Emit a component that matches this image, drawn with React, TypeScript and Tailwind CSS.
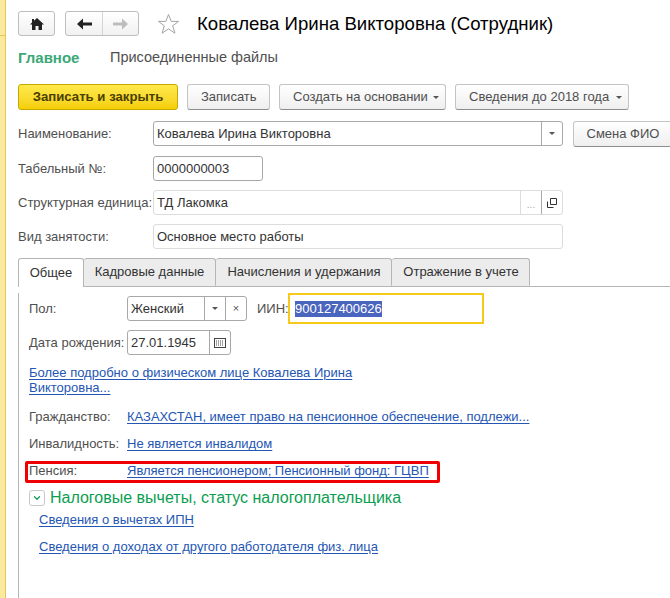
import { ChevronDown } from "lucide-react";

const labelCls = "text-[#4f4f4f]";
const linkCls = "text-[#2456b4] underline underline-offset-2 decoration-1";

function Caret() {
  return <span className="w-0 h-0 border-x-[3px] border-x-transparent border-t-[3px] border-t-[#555]" />;
}

function Btn({ text, caret, width }: { text: string; caret?: boolean; width: string }) {
  return (
    <div className={`${width} h-[26px] flex items-center justify-between pl-[13px] pr-[6px] rounded-[3px] border border-[#c4c4c4] border-b-[#8e8e8e] bg-gradient-to-b from-white to-[#efefef] text-[#4f4f4f] whitespace-nowrap`}>
      <span>{text}</span>
      {caret && <Caret />}
    </div>
  );
}

function Field({ text, width, muted, children }: { text: string; width: string; muted?: boolean; children?: React.ReactNode }) {
  return (
    <div className={`${width} shrink-0 h-[25px] flex items-stretch rounded-[3px] border ${muted ? "border-[#dcdcdc]" : "border-[#a8a8a8]"} bg-white`}>
      <span className="flex-1 px-[3px] leading-[24px] text-[#333] whitespace-nowrap overflow-hidden">{text}</span>
      {children}
    </div>
  );
}

function FormRow({ label, className, children }: { label: string; className: string; children: React.ReactNode }) {
  return (
    <div className={`flex items-center h-[25px] ${className}`}>
      <span className={`w-[135px] shrink-0 whitespace-nowrap ${labelCls}`}>{label}</span>
      {children}
    </div>
  );
}

function InnerRow({ label, link, className }: { label: string; link: string; className: string }) {
  return (
    <div className={`flex items-center h-[16px] whitespace-nowrap ${className}`}>
      <span className={`w-[98px] shrink-0 ${labelCls}`}>{label}</span>
      <span className={linkCls}>{link}</span>
    </div>
  );
}

export default function App() {
  return (
    <div className="w-[670px] h-[598px] overflow-hidden flex bg-white text-[13px] font-['Liberation_Sans',sans-serif]">
      <div className="w-[6px] shrink-0 bg-[#fbe99e] border-r border-[#e5c75a]">
        <div className="h-[36px] border-b border-[#e5c75a]" />
      </div>

      <div className="flex-1 min-w-0 pl-[12px]">
        <div className="flex items-center h-[25px] mt-[11px]">
          <div className="w-[37px] h-[25px] flex items-center justify-center rounded-[3px] border border-[#bdbdbd] bg-gradient-to-b from-white to-[#f1f1f1]">
            <svg width="14" height="12" viewBox="0 0 14 12">
              <path d="M7 0 14 6.5H12V12H8.5V8H5.5V12H2V6.5H0L2 4.6V1H4V2.8Z" fill="#222" />
            </svg>
          </div>
          <div className="ml-[10px] w-[74px] h-[25px] flex rounded-[3px] border border-[#bdbdbd] bg-gradient-to-b from-white to-[#f1f1f1]">
            <div className="w-[37px] flex items-center justify-center border-r border-[#d4d4d4]">
              <svg width="15" height="12" viewBox="0 0 15 12"><path d="M0 6 6 0.5V4.5H15V7.5H6V11.5Z" fill="#222" /></svg>
            </div>
            <div className="flex-1 flex items-center justify-center">
              <svg width="15" height="12" viewBox="0 0 15 12"><path d="M15 6 9 0.5V4.5H0V7.5H9V11.5Z" fill="#bdbdbd" /></svg>
            </div>
          </div>
          <svg className="ml-[18px]" width="23" height="22" viewBox="0 0 23 22">
            <path d="M11.5 1.5 14.2 8.4H21.5L15.7 12.8 17.9 20.2 11.5 15.9 5.1 20.2 7.3 12.8 1.5 8.4H8.8Z" fill="none" stroke="#a3a3a3" strokeWidth="1" />
          </svg>
          <span className="ml-[17px] text-[18.6px] text-black whitespace-nowrap">Ковалева Ирина Викторовна (Сотрудник)</span>
        </div>

        <div className="flex items-center h-[16px] mt-[14px]">
          <span className="w-[92px] text-[15px] font-bold text-[#3aa877]">Главное</span>
          <span className="text-[14.5px] text-[#4f4f4f]">Присоединенные файлы</span>
        </div>

        <div className="flex gap-[9px] mt-[18px]">
          <div className="w-[160px] h-[26px] flex items-center justify-center rounded-[3px] border border-[#c5a800] bg-gradient-to-b from-[#ffe94a] to-[#f5cf00] text-[13.2px] font-bold text-[#4a3f00]">
            Записать и закрыть
          </div>
          <Btn text="Записать" width="w-[83px]" />
          <Btn text="Создать на основании" caret width="w-[167px]" />
          <Btn text="Сведения до 2018 года" caret width="w-[174px]" />
        </div>

        <FormRow label="Наименование:" className="mt-[11px]">
          <Field text="Ковалева Ирина Викторовна" width="w-[410px]">
            <span className="w-[21px] flex items-center justify-center border-l border-[#a8a8a8]"><Caret /></span>
          </Field>
          <div className="ml-[10px] w-[100px] shrink-0 h-[26px] flex items-center justify-center rounded-l-[3px] border border-[#c4c4c4] border-b-[#8e8e8e] bg-gradient-to-b from-white to-[#efefef] text-[#4f4f4f]">
            Смена ФИО
          </div>
        </FormRow>

        <FormRow label="Табельный №:" className="mt-[10px]">
          <Field text="0000000003" width="w-[110px]" />
        </FormRow>

        <FormRow label="Структурная единица:" className="mt-[9px]">
          <Field text="ТД Лакомка" width="w-[410px]" muted>
            <span className="w-[21px] flex items-center justify-center border-l border-[#dcdcdc] text-[#aaa] text-[10px] pt-[4px]">...</span>
            <span className="w-[21px] flex items-center justify-center border-l border-[#a8a8a8]">
              <svg width="10" height="10" viewBox="0 0 10 10" fill="none" stroke="#333"><path d="M3.5 .5H9.5V6.5H3.5Z" /><path d="M.5 3.5V9.5H6.5" /></svg>
            </span>
          </Field>
        </FormRow>

        <FormRow label="Вид занятости:" className="mt-[9px]">
          <Field text="Основное место работы" width="w-[410px]" muted />
        </FormRow>

        <div className="mt-[9px] flex h-[29px] border-b border-[#b5b5b5]">
          <div className="w-[66px] h-[29px] flex items-center justify-center rounded-t-[3px] border border-b-0 border-[#b5b5b5] bg-white text-[#333]">Общее</div>
          <div className="w-[132px] flex items-center justify-center rounded-t-[3px] border-y border-r border-t-[#b5b5b5] border-r-[#b5b5b5] border-b-transparent bg-[#ececec] text-[#333]">Кадровые данные</div>
          <div className="w-[176px] pl-[1px] flex items-center justify-center rounded-t-[3px] border-y border-r border-t-[#b5b5b5] border-r-[#b5b5b5] border-b-transparent bg-[#ececec] text-[#333]">Начисления и удержания</div>
          <div className="w-[138px] pl-[1px] flex items-center justify-center rounded-t-[3px] border-y border-r border-t-[#b5b5b5] border-r-[#b5b5b5] border-b-transparent bg-[#ececec] text-[#333]">Отражение в учете</div>
        </div>

        <div className="h-[311px] border-l border-[#b5b5b5] pl-[10px]">
          <div className="flex items-center h-[31px] mt-[6px]">
            <span className={`w-[98px] shrink-0 ${labelCls}`}>Пол:</span>
            <Field text="Женский" width="w-[120px]">
              <span className="w-[21px] flex items-center justify-center border-l border-[#a8a8a8]"><Caret /></span>
              <span className="w-[21px] flex items-center justify-center border-l border-[#a8a8a8] text-[#555] text-[11px]">×</span>
            </Field>
            <span className={`ml-[10px] w-[31px] ${labelCls}`}>ИИН:</span>
            <div className="w-[196px] h-[31px] flex items-center border-2 border-[#f7c918] pl-[5px]">
              <span className="bg-[#4a65bd] text-white leading-[16px]">900127400626</span>
            </div>
          </div>

          <div className="flex items-center h-[25px] mt-[6px]">
            <span className={`w-[98px] shrink-0 whitespace-nowrap ${labelCls}`}>Дата рождения:</span>
            <Field text="27.01.1945" width="w-[104px]">
              <span className="w-[21px] flex items-center justify-center border-l border-[#a8a8a8]">
                <svg width="12" height="10" viewBox="0 0 12 10"><rect x=".5" y=".5" width="11" height="9" fill="none" stroke="#444" /><path d="M2 3h8M2 5h8M2 7h8" stroke="#444" strokeDasharray="1 1" /></svg>
              </span>
            </Field>
          </div>

          <div className="mt-[10px] w-[326px] leading-[15px]">
            <span className={linkCls}>Более подробно о физическом лице Ковалева Ирина Викторовна...</span>
          </div>

          <InnerRow label="Гражданство:" link="КАЗАХСТАН, имеет право на пенсионное обеспечение, подлежи..." className="mt-[14px]" />
          <InnerRow label="Инвалидность:" link="Не является инвалидом" className="mt-[11px]" />

          <div className="relative">
            <InnerRow label="Пенсия:" link="Является пенсионером; Пенсионный фонд: ГЦВП" className="mt-[11px]" />
            <div className="absolute left-[-4px] top-[-2px] w-[415px] h-[22px] border-[3px] border-[#f00000] rounded-[2px]" />
          </div>

          <div className="flex items-center h-[18px] mt-[10px]">
            <span className="w-[16px] h-[16px] flex items-center justify-center rounded-[3px] border border-[#c8c8c8]">
              <ChevronDown size={10} color="#0f9d58" strokeWidth={3} />
            </span>
            <span className="ml-[5px] text-[16px] text-[#0b9e50] whitespace-nowrap">Налоговые вычеты, статус налогоплательщика</span>
          </div>

          <div className="ml-[10px] mt-[5px] leading-[16px]"><span className={linkCls}>Сведения о вычетах ИПН</span></div>
          <div className="ml-[10px] mt-[11px] leading-[16px]"><span className={linkCls}>Сведения о доходах от другого работодателя физ. лица</span></div>
        </div>
      </div>
    </div>
  );
}
